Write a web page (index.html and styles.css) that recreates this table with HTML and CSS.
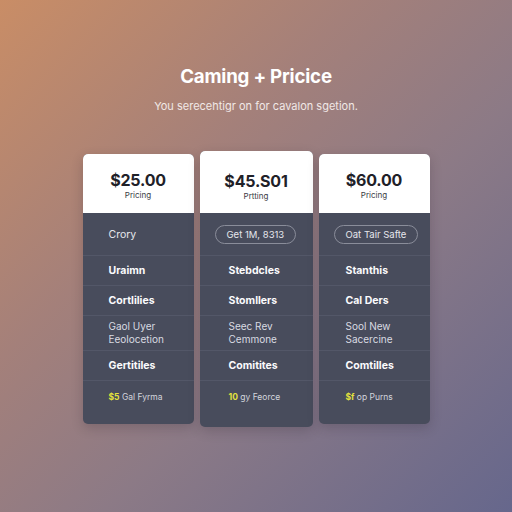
FILE: index.html
```html
<!DOCTYPE html>
<html>
<head>
<meta charset="utf-8">
<link rel="stylesheet" href="styles.css">
</head>
<body>
<main class="page">
  <header class="intro">
    <h1 class="title">Caming + Pricice</h1>
    <p class="subtitle">You serecehtigr on for cavalon sgetion.</p>
  </header>
  <section class="plans">
    <article class="card">
      <div class="card-head">
        <div class="price">$25.00</div>
        <div class="label">Pricing</div>
      </div>
      <ul class="rows">
        <li class="row row-top"><span class="plain">Crory</span></li>
        <li class="row"><span class="strong">Uraimn</span></li>
        <li class="row"><span class="strong">Cortlilies</span></li>
        <li class="row row-two"><span class="light">Gaol Uyer<br>Eeolocetion</span></li>
        <li class="row"><span class="strong">Gertitiles</span></li>
        <li class="row row-last"><span class="foot"><b>$5</b> Gal Fyrma</span></li>
      </ul>
    </article>
    <article class="card featured">
      <div class="card-head">
        <div class="price">$45.S01</div>
        <div class="label">Prtting</div>
      </div>
      <ul class="rows">
        <li class="row row-top"><span class="pill">Get 1M, 8313</span></li>
        <li class="row"><span class="strong">Stebdcles</span></li>
        <li class="row"><span class="strong">Stomllers</span></li>
        <li class="row row-two"><span class="light">Seec Rev<br>Cemmone</span></li>
        <li class="row"><span class="strong">Comitites</span></li>
        <li class="row row-last"><span class="foot"><b>10</b> gy Feorce</span></li>
      </ul>
    </article>
    <article class="card">
      <div class="card-head">
        <div class="price">$60.00</div>
        <div class="label">Pricing</div>
      </div>
      <ul class="rows">
        <li class="row row-top"><span class="pill">Oat Tair Safte</span></li>
        <li class="row"><span class="strong">Stanthis</span></li>
        <li class="row"><span class="strong">Cal Ders</span></li>
        <li class="row row-two"><span class="light">Sool New<br>Sacercine</span></li>
        <li class="row"><span class="strong">Comtilles</span></li>
        <li class="row row-last"><span class="foot"><b>$f</b> op Purns</span></li>
      </ul>
    </article>
  </section>
</main>
</body>
</html>
```

FILE: styles.css
```css
* { box-sizing: border-box; }
html, body { margin: 0; padding: 0; }
body {
  width: 512px;
  height: 512px;
  overflow: hidden;
  font-family: Inter, "Open Sans", "Liberation Sans", sans-serif;
  background: linear-gradient(135deg, #c98d66 0%, #a4807a 35%, #8c7a86 60%, #66678c 100%);
  color: #fff;
}
.page {
  display: flex;
  flex-direction: column;
  align-items: center;
  padding-top: 64px;
}
.intro { text-align: center; }
.title {
  margin: 0;
  font-size: 18.7px;
  font-weight: 700;
  line-height: 26px;
  letter-spacing: -0.2px;
  color: #fff;
}
.subtitle {
  margin: 8px 0 0;
  font-size: 11px;
  line-height: 16px;
  color: #f1e8e6;
}
.plans {
  display: flex;
  align-items: center;
  gap: 6px;
  margin-top: 37px;
}
.card {
  width: 111px;
  border-radius: 5px;
  overflow: hidden;
  background: #484c5c;
  box-shadow: 0 4px 12px rgba(40, 30, 40, 0.22);
}
.featured { width: 113px; }
.card-head {
  background: #fff;
  height: 59px;
  display: flex;
  flex-direction: column;
  align-items: center;
  justify-content: center;
  color: #1f2128;
  padding-top: 3px;
}
.featured .card-head { height: 62px; padding-top: 8px; }
.price {
  font-size: 16px;
  font-weight: 700;
  line-height: 20px;
  letter-spacing: -0.2px;
}
.label {
  font-size: 8px;
  line-height: 10px;
  color: #3a3c44;
}
.rows {
  list-style: none;
  margin: 0;
  padding: 0 0 11px;
}
.featured .rows { padding-bottom: 14px; }
.row {
  height: 30px;
  display: flex;
  align-items: center;
  padding-left: 26px;
  border-bottom: 1px solid #535768;
  font-size: 10.5px;
}
.featured .row { padding-left: 29px; }
.card:last-child .row { padding-left: 27px; }
.row-top { height: 43px; }
.row-two { height: 35px; }
.row-last { border-bottom: none; height: 32px; }
.plain { color: #e6e7ec; font-size: 10.5px; }
.strong { font-weight: 700; color: #fbfbfd; }
.light { color: #d9dbe2; font-size: 10px; line-height: 13px; }
.foot { font-size: 8.5px; color: #d3d5dc; }
.foot b { color: #e4e23c; font-weight: 700; }
.row-top .pill {
  display: inline-block;
  height: 19px;
  line-height: 17px;
  padding: 0 11px;
  border: 1px solid #8a8d9a;
  border-radius: 10px;
  font-size: 9.5px;
  color: #e6e7ec;
  white-space: nowrap;
}
.featured .row-top, .card:last-child .row-top { padding-left: 15px; }
```
